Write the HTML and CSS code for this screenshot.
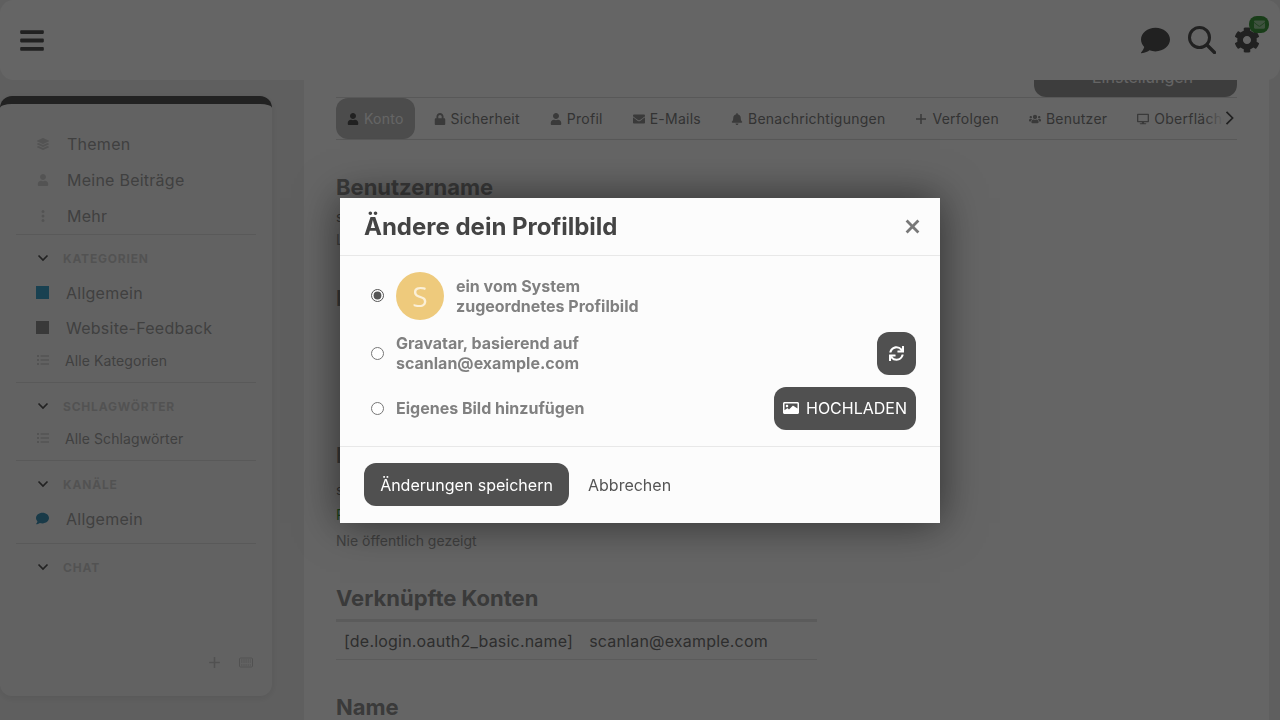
FILE: index.html
```html
<!DOCTYPE html>
<html lang="de">
<head>
    <meta charset="UTF-8">
    <meta name="viewport" content="width=device-width, initial-scale=1.0">
    <title>Ändere dein Profilbild</title>
    <link rel="stylesheet" href="styles.css">
</head>
<body>
    <svg class="sprite" xmlns="http://www.w3.org/2000/svg">
        <symbol id="i-bars" viewBox="0 0 448 512"><path d="M16 132h416c8.837 0 16-7.163 16-16V76c0-8.837-7.163-16-16-16H16C7.163 60 0 67.163 0 76v40c0 8.837 7.163 16 16 16zm0 160h416c8.837 0 16-7.163 16-16v-40c0-8.837-7.163-16-16-16H16c-8.837 0-16 7.163-16 16v40c0 8.837 7.163 16 16 16zm0 160h416c8.837 0 16-7.163 16-16v-40c0-8.837-7.163-16-16-16H16c-8.837 0-16 7.163-16 16v40c0 8.837 7.163 16 16 16z"/></symbol>
        <symbol id="i-comment" viewBox="0 0 512 512"><path d="M256 32C114.6 32 0 125.1 0 240c0 49.6 21.4 95 57 130.7C44.5 421.1 2.7 466 2.2 466.5c-2.2 2.3-2.8 5.7-1.5 8.7S4.8 480 8 480c66.3 0 116-31.8 140.6-51.4 32.7 12.3 69 19.4 107.4 19.4 141.4 0 256-93.1 256-208S397.4 32 256 32z"/></symbol>
        <symbol id="i-search" viewBox="0 0 28 28"><circle cx="11.5" cy="11.5" r="10" fill="none" stroke="currentColor" stroke-width="3"/><path d="M19 19l7.5 7.5" fill="none" stroke="currentColor" stroke-width="3.4" stroke-linecap="round"/></symbol>
        <symbol id="i-cog" viewBox="0 0 512 512"><path d="M487.4 315.7l-42.6-24.6c4.3-23.2 4.3-47 0-70.2l42.6-24.6c4.9-2.8 7.1-8.6 5.5-14-11.1-35.6-30-67.8-54.7-94.6-3.8-4.1-10-5.1-14.8-2.3L380.8 110c-17.9-15.4-38.5-27.3-60.8-35.1V25.8c0-5.6-3.9-10.5-9.4-11.7-36.7-8.2-74.3-7.8-109.2 0-5.5 1.2-9.4 6.1-9.4 11.7V75c-22.2 7.9-42.8 19.8-60.8 35.1L88.7 85.5c-4.9-2.8-11-1.9-14.8 2.3-24.7 26.7-43.6 58.9-54.7 94.6-1.7 5.4.6 11.2 5.5 14L67.3 221c-4.3 23.2-4.3 47 0 70.2l-42.6 24.6c-4.9 2.8-7.1 8.6-5.5 14 11.1 35.6 30 67.8 54.7 94.6 3.8 4.1 10 5.1 14.8 2.3l42.6-24.6c17.9 15.4 38.5 27.3 60.8 35.1v49.2c0 5.6 3.9 10.5 9.4 11.7 36.7 8.2 74.3 7.8 109.2 0 5.5-1.2 9.4-6.1 9.4-11.7v-49.2c22.2-7.9 42.8-19.8 60.8-35.1l42.6 24.6c4.9 2.8 11 1.9 14.8-2.3 24.7-26.7 43.6-58.9 54.7-94.6 1.5-5.5-.7-11.3-5.6-14.1zM256 336c-44.1 0-80-35.9-80-80s35.9-80 80-80 80 35.9 80 80-35.9 80-80 80z"/></symbol>
        <symbol id="i-user" viewBox="0 0 448 512"><path d="M224 256c70.7 0 128-57.3 128-128S294.7 0 224 0 96 57.3 96 128s57.3 128 128 128zm89.6 32h-16.7c-22.2 10.2-46.9 16-72.9 16s-50.6-5.8-72.9-16h-16.7C60.2 288 0 348.2 0 422.4V464c0 26.5 21.5 48 48 48h352c26.5 0 48-21.5 48-48v-41.6c0-74.2-60.2-134.4-134.4-134.4z"/></symbol>
        <symbol id="i-lock" viewBox="0 0 448 512"><path d="M400 224h-24v-72C376 68.2 307.8 0 224 0S72 68.2 72 152v72H48c-26.5 0-48 21.5-48 48v192c0 26.5 21.5 48 48 48h352c26.5 0 48-21.5 48-48V272c0-26.5-21.5-48-48-48zm-104 0H152v-72c0-39.7 32.3-72 72-72s72 32.3 72 72v72z"/></symbol>
        <symbol id="i-envelope" viewBox="0 0 512 512"><path d="M502.3 190.8c3.9-3.1 9.7-.2 9.7 4.7V400c0 26.5-21.5 48-48 48H48c-26.5 0-48-21.5-48-48V195.6c0-5 5.7-7.8 9.7-4.7 22.4 17.4 52.1 39.5 154.1 113.6 21.1 15.4 56.7 47.8 92.2 47.6 35.7.3 72-32.8 92.3-47.6 102-74.1 131.6-96.3 154-113.7zM256 320c23.2.4 56.6-29.2 73.4-41.4 132.7-96.3 142.8-104.7 173.4-128.7 5.8-4.5 9.2-11.5 9.2-18.9v-19c0-26.5-21.5-48-48-48H48C21.5 64 0 85.5 0 112v19c0 7.4 3.4 14.3 9.2 18.9 30.6 23.9 40.7 32.4 173.4 128.7 16.8 12.2 50.2 41.8 73.4 41.4z"/></symbol>
        <symbol id="i-bell" viewBox="0 0 448 512"><path d="M224 512c35.32 0 63.97-28.65 63.97-64H160.03c0 35.35 28.65 64 63.97 64zm215.39-149.71c-19.32-20.76-55.47-51.99-55.47-154.29 0-77.7-54.48-139.9-127.94-155.16V32c0-17.67-14.32-32-31.98-32s-31.98 14.33-31.98 32v20.84C118.56 68.1 64.08 130.3 64.08 208c0 102.3-36.15 133.53-55.47 154.29-6 6.45-8.66 14.16-8.61 21.71.11 16.4 12.98 32 32.1 32h383.8c19.12 0 32-15.6 32.1-32 .05-7.55-2.61-15.27-8.61-21.71z"/></symbol>
        <symbol id="i-plus" viewBox="0 0 12 12"><path d="M6 1v10M1 6h10" fill="none" stroke="currentColor" stroke-width="1.5"/></symbol>
        <symbol id="i-users" viewBox="0 0 640 512"><path d="M96 224c35.3 0 64-28.7 64-64s-28.7-64-64-64-64 28.7-64 64 28.7 64 64 64zm448 0c35.3 0 64-28.7 64-64s-28.7-64-64-64-64 28.7-64 64 28.7 64 64 64zm32 32h-64c-17.6 0-33.5 7.1-45.1 18.6 40.3 22.1 68.9 62 75.1 109.4h66c17.7 0 32-14.3 32-32v-32c0-35.3-28.7-64-64-64zm-256 0c61.9 0 112-50.1 112-112S381.9 32 320 32 208 82.1 208 144s50.1 112 112 112zm76.8 32h-8.3c-20.8 10-43.9 16-68.5 16s-47.6-6-68.5-16h-8.3C179.6 288 128 339.6 128 403.2V432c0 26.5 21.5 48 48 48h288c26.5 0 48-21.5 48-48v-28.8c0-63.6-51.6-115.2-115.2-115.2zm-223.7-13.4C161.5 263.1 145.6 256 128 256H64c-35.3 0-64 28.7-64 64v32c0 17.7 14.3 32 32 32h65.9c6.3-47.4 34.9-87.3 75.2-109.4z"/></symbol>
        <symbol id="i-desktop" viewBox="0 0 576 512"><path d="M528 0H48C21.5 0 0 21.5 0 48v320c0 26.5 21.5 48 48 48h192l-16 48h-72c-13.3 0-24 10.7-24 24s10.7 24 24 24h272c13.3 0 24-10.7 24-24s-10.7-24-24-24h-72l-16-48h192c26.5 0 48-21.5 48-48V48c0-26.5-21.5-48-48-48zm-16 352H64V64h448v288z"/></symbol>
        <symbol id="i-layers" viewBox="0 0 512 512"><path d="M12.41 148.02l232.94 105.67c6.8 3.09 14.49 3.09 21.29 0l232.94-105.67c16.55-7.51 16.55-32.52 0-40.03L266.65 2.31a25.607 25.607 0 0 0-21.29 0L12.41 107.98c-16.55 7.51-16.55 32.53 0 40.04zm487.18 88.28l-58.09-26.33-161.64 73.27c-7.56 3.43-15.59 5.17-23.86 5.17s-16.29-1.74-23.86-5.17L70.51 209.97l-58.1 26.33c-16.55 7.5-16.55 32.5 0 40l232.94 105.59c6.8 3.08 14.49 3.08 21.29 0L499.59 276.3c16.55-7.5 16.55-32.5 0-40zm0 127.8l-57.87-26.23-161.86 73.37c-7.56 3.43-15.59 5.17-23.86 5.17s-16.29-1.74-23.86-5.17L70.29 337.87 12.41 364.1c-16.55 7.5-16.55 32.5 0 40l232.94 105.59c6.8 3.08 14.49 3.08 21.29 0L499.59 404.1c16.55-7.5 16.55-32.5 0-40z"/></symbol>
        <symbol id="i-dots" viewBox="0 0 12 12"><circle cx="6" cy="1.5" r="1.5"/><circle cx="6" cy="6" r="1.5"/><circle cx="6" cy="10.5" r="1.5"/></symbol>
        <symbol id="i-list" viewBox="0 0 12 12"><path d="M0 1h2v2H0zM0 5h2v2H0zM0 9h2v2H0zM3.5 1.2H12v1.6H3.5zM3.5 5.2H12v1.6H3.5zM3.5 9.2H12v1.6H3.5z"/></symbol>
        <symbol id="i-chevron-down" viewBox="0 0 12 12"><path d="M1.5 3.5L6 8l4.500-4.500" fill="none" stroke="currentColor" stroke-width="1.700"/></symbol>
        <symbol id="i-chevron-right" viewBox="0 0 12 12"><path d="M3 .8L8.200 6 3 11.200" fill="none" stroke="currentColor" stroke-width="1.500"/></symbol>
        <symbol id="i-sync" viewBox="0 0 512 512"><path d="M440.65 12.57l4 82.77A247.16 247.16 0 0 0 255.83 8C134.73 8 33.91 94.92 12.29 209.82A12 12 0 0 0 24.09 224h49.05a12 12 0 0 0 11.67-9.26 175.91 175.91 0 0 1 317-56.94l-101.46-4.86a12 12 0 0 0-12.57 12v47.41a12 12 0 0 0 12 12H500a12 12 0 0 0 12-12V12a12 12 0 0 0-12-12h-47.37a12 12 0 0 0-11.98 12.57zM255.83 432a175.61 175.61 0 0 1-146-77.8l101.8 4.87a12 12 0 0 0 12.57-12v-47.4a12 12 0 0 0-12-12H12a12 12 0 0 0-12 12V500a12 12 0 0 0 12 12h47.35a12 12 0 0 0 12-12.6l-4.15-82.57A247.17 247.17 0 0 0 255.83 504c121.11 0 221.93-86.92 243.55-201.82a12 12 0 0 0-11.8-14.18h-49.05a12 12 0 0 0-11.67 9.26A175.86 175.86 0 0 1 255.83 432z"/></symbol>
        <symbol id="i-image" viewBox="0 0 512 512"><path d="M464 64H48C21.49 64 0 85.49 0 112v288c0 26.51 21.49 48 48 48h416c26.51 0 48-21.49 48-48V112c0-26.51-21.49-48-48-48zm-6 336H54a6 6 0 0 1-6-6V118a6 6 0 0 1 6-6h404a6 6 0 0 1 6 6v276a6 6 0 0 1-6 6zM128 152c-22.091 0-40 17.909-40 40s17.909 40 40 40 40-17.909 40-40-17.909-40-40-40zM48 400h416v-128l-135.515-87.515c-4.686-4.686-12.284-4.686-16.971 0L192 304l-39.515-39.515c-4.686-4.686-12.284-4.686-16.971 0L48 330z"/></symbol>
        <symbol id="i-times" viewBox="0 0 14 14"><path d="M1.500 1.500l11 11M12.500 1.500l-11 11" fill="none" stroke="currentColor" stroke-width="2.600"/></symbol>
        <symbol id="i-keyboard" viewBox="0 0 14 10"><rect x=".5" y=".5" width="13" height="9" rx="1" fill="none" stroke="currentColor"/><path d="M2 2.500h10M2 4.500h10M2 7.500h10" stroke="currentColor" stroke-dasharray="1.500 .7"/></symbol>
    </svg>

    <header class="site-header">
        <svg class="icon bars-icon"><use href="#i-bars"/></svg>
        <div class="header-icons">
            <svg class="icon chat-icon"><use href="#i-comment"/></svg>
            <svg class="icon search-icon"><use href="#i-search"/></svg>
            <div class="user-menu">
                <svg class="icon cog-icon"><use href="#i-cog"/></svg>
                <span class="badge"><svg class="icon"><use href="#i-envelope"/></svg></span>
            </div>
        </div>
    </header>

    <div class="page">
        <aside class="sidebar-col">
            <nav class="sidebar">
                <div class="side-section first">
                    <a class="side-link"><svg class="icon"><use href="#i-layers"/></svg>Themen</a>
                    <a class="side-link"><svg class="icon"><use href="#i-user"/></svg>Meine Beiträge</a>
                    <a class="side-link"><svg class="icon"><use href="#i-dots"/></svg>Mehr</a>
                </div>
                <div class="side-section">
                    <div class="side-head"><svg class="icon"><use href="#i-chevron-down"/></svg>KATEGORIEN</div>
                    <a class="side-link"><span class="square blue"></span>Allgemein</a>
                    <a class="side-link"><span class="square dark"></span>Website-Feedback</a>
                    <a class="side-link small"><svg class="icon"><use href="#i-list"/></svg>Alle Kategorien</a>
                </div>
                <div class="side-section">
                    <div class="side-head"><svg class="icon"><use href="#i-chevron-down"/></svg>SCHLAGWÖRTER</div>
                    <a class="side-link small"><svg class="icon"><use href="#i-list"/></svg>Alle Schlagwörter</a>
                </div>
                <div class="side-section">
                    <div class="side-head"><svg class="icon"><use href="#i-chevron-down"/></svg>KANÄLE</div>
                    <a class="side-link"><svg class="icon channel-icon"><use href="#i-comment"/></svg>Allgemein</a>
                </div>
                <div class="side-section last">
                    <div class="side-head"><svg class="icon"><use href="#i-chevron-down"/></svg>CHAT</div>
                </div>
                <div class="side-footer">
                    <svg class="icon"><use href="#i-plus"/></svg>
                    <svg class="icon keyboard"><use href="#i-keyboard"/></svg>
                </div>
            </nav>
        </aside>

        <main class="main">
            <div class="user-nav">
                <span class="nav-item first">Zusammenfassung</span>
                <span class="nav-item second">Benachrichtigungen</span>
                <span class="prefs-btn">Einstellungen</span>
            </div>

            <div class="tabs">
                <a class="tab active"><svg class="icon"><use href="#i-user"/></svg>Konto</a>
                <a class="tab"><svg class="icon"><use href="#i-lock"/></svg>Sicherheit</a>
                <a class="tab"><svg class="icon"><use href="#i-user"/></svg>Profil</a>
                <a class="tab"><svg class="icon"><use href="#i-envelope"/></svg>E-Mails</a>
                <a class="tab"><svg class="icon"><use href="#i-bell"/></svg>Benachrichtigungen</a>
                <a class="tab"><svg class="icon"><use href="#i-plus"/></svg>Verfolgen</a>
                <a class="tab"><svg class="icon"><use href="#i-users"/></svg>Benutzer</a>
                <a class="tab"><svg class="icon"><use href="#i-desktop"/></svg>Oberfläche</a>
                <div class="tabs-fade"><svg class="icon"><use href="#i-chevron-right"/></svg></div>
            </div>

            <section class="pref first">
                <h2>Benutzername</h2>
                <p class="value">scanlan</p>
                <p class="hint">Lässt sich nicht ändern</p>
            </section>
            <section class="pref avatar-pref">
                <h2>Profilbild</h2>
            </section>
            <section class="pref email-pref">
                <h2>E-Mail</h2>
                <p class="value">scanlan@example.com</p>
                <p class="primary">Primär</p>
                <p class="hint">Nie öffentlich gezeigt</p>
            </section>
            <section class="pref">
                <h2>Verknüpfte Konten</h2>
                <div class="account-row">
                    <span>[de.login.oauth2_basic.name]</span>
                    <span>scanlan@example.com</span>
                </div>
            </section>
            <section class="pref">
                <h2>Name</h2>
            </section>
        </main>

        <div class="scrollbar"></div>
    </div>

    <div class="overlay">
        <div class="modal">
            <div class="modal-header">
                <h1>Ändere dein Profilbild</h1>
                <svg class="icon close-icon"><use href="#i-times"/></svg>
            </div>
            <div class="modal-body">
                <label class="avatar-row">
                    <input type="radio" name="avatar" checked>
                    <span class="letter-avatar">S</span>
                    <span class="option-text system">ein vom System<br>zugeordnetes Profilbild</span>
                </label>
                <label class="avatar-row">
                    <input type="radio" name="avatar">
                    <span class="option-text">Gravatar, basierend auf<br>scanlan@example.com</span>
                    <span class="btn icon-btn"><svg class="icon"><use href="#i-sync"/></svg></span>
                </label>
                <label class="avatar-row">
                    <input type="radio" name="avatar">
                    <span class="option-text">Eigenes Bild hinzufügen</span>
                    <span class="btn upload-btn"><svg class="icon"><use href="#i-image"/></svg>HOCHLADEN</span>
                </label>
            </div>
            <div class="modal-footer">
                <span class="btn save-btn">Änderungen speichern</span>
                <span class="cancel">Abbrechen</span>
            </div>
        </div>
    </div>
</body>
</html>
```

FILE: styles.css
```css
* {
    box-sizing: border-box;
}
html, body {
    height: 720px;
    overflow: hidden;
}
body {
    margin: 0;
    font-family: Inter, "Noto Sans", sans-serif;
    color: #575757;
    background-color: #fff;
}
a {
    color: inherit;
}
h1, h2, p {
    margin: 0;
}
.sprite {
    display: none;
}
.icon {
    display: block;
    width: 14px;
    height: 14px;
    fill: currentColor;
    flex-shrink: 0;
}

/* header */
.site-header {
    position: fixed;
    top: 0;
    left: 0;
    right: 0;
    z-index: 2;
    height: 80px;
    padding: 0 20px;
    display: flex;
    align-items: center;
    justify-content: space-between;
    background-color: #fff;
    border-radius: 14px;
    color: #1b1b1b;
}
.bars-icon {
    width: 24px;
    height: 27px;
}
.header-icons {
    display: flex;
    align-items: center;
    gap: 18px;
}
.chat-icon {
    width: 29px;
    height: 29px;
}
.search-icon {
    width: 28px;
    height: 28px;
}
.user-menu {
    position: relative;
}
.cog-icon {
    width: 26px;
    height: 26px;
}
.badge {
    position: absolute;
    top: -11px;
    right: -9px;
    width: 20px;
    height: 17px;
    border-radius: 8px;
    background-color: #007a00;
    color: #7fbf7f;
    display: flex;
    align-items: center;
    justify-content: center;
}
.badge .icon {
    width: 11px;
    height: 11px;
}

/* layout */
.page {
    display: flex;
    height: 720px;
}
.sidebar-col {
    width: 304px;
    flex-shrink: 0;
    padding-top: 96px;
    background-color: #ececec;
}
.scrollbar {
    width: 11px;
    flex-shrink: 0;
    background-color: #ececec;
}

/* sidebar */
.sidebar {
    width: 272px;
    height: 600px;
    display: flex;
    flex-direction: column;
    background-color: #f6f6f6;
    border-top: 8px solid #1e1e1e;
    border-radius: 12px;
    box-shadow: 0 2px 8px rgba(0, 0, 0, 0.12);
}
.side-section {
    margin: 0 16px;
    padding: 0 0 7px 20px;
    border-bottom: 1px solid #d8d8d8;
}
.side-section.first {
    padding-top: 22px;
    padding-bottom: 0;
}
.side-section.last {
    border-bottom: none;
}
.side-link {
    display: flex;
    align-items: center;
    height: 35px;
    font-size: 16px;
    letter-spacing: 0.25px;
    color: #828282;
}
.first .side-link {
    height: 36px;
}
.side-link .icon {
    width: 12px;
    height: 12px;
    margin: 0 18px 0 1px;
    color: #c4c4c4;
}
.side-link.small {
    height: 30px;
    font-size: 14px;
    letter-spacing: 0.1px;
}
.side-link.small .icon {
    margin-right: 16px;
}
.side-link .channel-icon {
    width: 13px;
    height: 13px;
    margin: 0 17px 0 0;
    color: #006f9f;
}
.square {
    width: 13px;
    height: 13px;
    margin-right: 17px;
}
.square.blue {
    background-color: #0088bb;
}
.square.dark {
    background-color: #6b6b6b;
}
.side-head {
    display: flex;
    align-items: center;
    height: 40px;
    padding-top: 6px;
    font-size: 12px;
    font-weight: 700;
    letter-spacing: 0.8px;
    color: #c0c0c0;
}
.side-head .icon {
    width: 12px;
    height: 12px;
    margin: 0 14px 0 1px;
    color: #1e1e1e;
}
.side-footer {
    margin-top: auto;
    height: 42px;
    padding: 0 19px 0 0;
    display: flex;
    justify-content: flex-end;
    align-items: flex-start;
    gap: 18px;
    padding-top: 2px;
    color: #bdbdbd;
}
.side-footer .icon {
    width: 13px;
    height: 13px;
}
.side-footer .keyboard {
    width: 14px;
}

/* main */
.main {
    flex: 1;
    min-width: 0;
    padding: 0 32px;
    background-color: #fff;
}
.user-nav {
    position: relative;
    display: flex;
    align-items: flex-end;
    height: 98px;
    border-bottom: 1px solid #d4d4d4;
    font-size: 16px;
    color: #464646;
}
.nav-item {
    position: absolute;
    bottom: 17px;
}
.nav-item.first {
    left: 90px;
}
.nav-item.second {
    right: 262px;
}
.prefs-btn {
    margin-left: auto;
    width: 203px;
    height: 40px;
    padding: 10px 0 0 58px;
    border-radius: 0 0 12px 12px;
    background-color: #7b7b7b;
    color: #fff;
}
.tabs {
    position: relative;
    display: flex;
    gap: 8px;
    height: 42px;
    border-bottom: 1px solid #d4d4d4;
    overflow: hidden;
}
.tab {
    display: flex;
    align-items: center;
    gap: 5px;
    height: 41px;
    padding: 0 11px;
    font-size: 14px;
    letter-spacing: 0.25px;
    white-space: nowrap;
    border-radius: 12px;
}
.tab .icon {
    width: 12px;
    height: 12px;
    color: #6e6e6e;
}
.tab.active {
    background-color: #aaa;
    color: #fff;
}
.tab.active .icon {
    color: #1b1b1b;
}
.tabs-fade {
    position: absolute;
    top: 0;
    right: 0;
    width: 32px;
    height: 41px;
    display: flex;
    align-items: center;
    justify-content: flex-end;
    background: linear-gradient(to right, rgba(255, 255, 255, 0), #fff 60%);
    color: #1b1b1b;
}
.tabs-fade .icon {
    width: 14px;
    height: 14px;
    margin-top: -2px;
}
.pref {
    margin-top: 33px;
}
.pref.first {
    margin-top: 33px;
}
.pref h2 {
    font-size: 22px;
    line-height: 28px;
    font-weight: 700;
    color: #6e6e6e;
}
.value {
    margin-top: 6px;
    font-size: 14px;
    line-height: 20px;
}
.first .hint {
    margin-top: 3px;
}
.hint {
    margin-top: 6px;
    font-size: 14px;
    line-height: 20px;
    color: #828282;
}
.avatar-pref {
    margin-top: 34px;
    height: 157px;
}
.email-pref {
    margin-top: 0;
}
.email-pref .value {
    margin-top: 11px;
}
.primary {
    margin-top: 5px;
    font-size: 14px;
    line-height: 20px;
    color: #008a00;
}
.account-row {
    display: flex;
    gap: 16px;
    width: 481px;
    height: 41px;
    margin-top: 7px;
    padding: 0 8px;
    align-items: center;
    border-top: 3px solid #dcdcdc;
    border-bottom: 1px solid #dcdcdc;
    font-size: 16px;
    letter-spacing: 0.2px;
    color: #464646;
}

/* modal */
.overlay {
    position: fixed;
    inset: 0;
    z-index: 5;
    display: flex;
    align-items: center;
    justify-content: center;
    background-color: rgba(36, 36, 36, 0.7);
}
.modal {
    width: 600px;
    background-color: #fcfcfc;
    box-shadow: 0 0 40px rgba(0, 0, 0, 0.55);
}
.modal-header {
    display: flex;
    align-items: center;
    justify-content: space-between;
    height: 58px;
    padding: 0 20px 0 24px;
    border-bottom: 1px solid #e8e8e8;
}
.modal-header h1 {
    font-size: 24px;
    font-weight: 700;
    color: #444;
}
.close-icon {
    width: 15px;
    height: 15px;
    color: #787878;
}
.modal-body {
    display: flex;
    flex-direction: column;
    gap: 12px;
    padding: 16px 24px;
    border-bottom: 1px solid #e8e8e8;
}
.avatar-row {
    display: flex;
    align-items: center;
}
.avatar-row input {
    width: 13px;
    height: 13px;
    margin: 0 12px 0 7px;
    accent-color: #555;
}
.letter-avatar {
    width: 48px;
    height: 48px;
    margin-right: 12px;
    display: flex;
    align-items: center;
    justify-content: center;
    border-radius: 50%;
    background-color: #eeca7c;
    color: #fbf0d8;
    font-family: "Open Sans", sans-serif;
    font-size: 28px;
}
.option-text {
    font-size: 16px;
    line-height: 20px;
    font-weight: 700;
    color: #808080;
}
.btn {
    display: inline-flex;
    align-items: center;
    justify-content: center;
    height: 43px;
    border-radius: 12px;
    background-color: #505050;
    color: #fff;
    font-size: 16px;
}
.icon-btn {
    width: 39px;
    margin-left: auto;
}
.icon-btn .icon {
    width: 15px;
    height: 15px;
}
.upload-btn {
    width: 142px;
    margin-left: auto;
    gap: 7px;
}
.upload-btn .icon {
    width: 16px;
    height: 16px;
}
.modal-footer {
    display: flex;
    align-items: center;
    gap: 19px;
    height: 76px;
    padding: 0 24px;
}
.save-btn {
    width: 205px;
}
.cancel {
    font-size: 16px;
    color: #555;
}
```
